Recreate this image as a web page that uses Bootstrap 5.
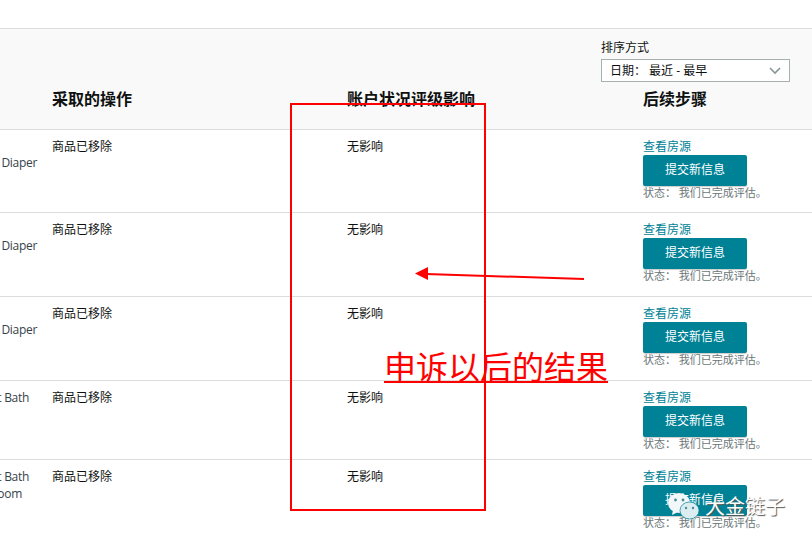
<!DOCTYPE html>
<html lang="zh">
<head>
<meta charset="utf-8">
<title>申诉结果</title>
<link href="https://cdn.jsdelivr.net/npm/bootstrap@5.3.0/dist/css/bootstrap.min.css" rel="stylesheet">
<style>
html,body{height:100%}
body{font-family:"Open Sans","Noto Sans CJK SC",sans-serif;font-size:12px;line-height:17px;color:#0f1111;background:#fff;overflow:hidden;position:relative}
.sheet{padding-top:28px}
.sortbar{background:#f9f9f9;border-top:1px solid #ddd;height:58px;padding:10px 22px 0 0;justify-content:flex-end}
.sortbox{width:189px}
.sortlabel{display:block;margin:0 0 3px;line-height:17px}
.sortpick.form-select{font-size:12px;height:23px;line-height:17px;padding:2px 24px 2px 8px;border:1px solid #a6b0b1;border-radius:0;color:#0f1111;background-size:14px 10px;background-position:right 7px center;background-image:url("data:image/svg+xml,%3csvg xmlns='http://www.w3.org/2000/svg' viewBox='0 0 14 10'%3e%3cpath fill='none' stroke='%23879596' stroke-width='1.6' d='M2 2l5 5 5-5'/%3e%3c/svg%3e")}
.restable.table{table-layout:fixed;width:812px;margin:0;--bs-table-bg:transparent;--bs-table-color:#0f1111;--bs-table-border-color:#ddd}
.restable th{background:#f9f9f9;font-size:16px;line-height:24px;font-weight:700;height:43px;padding:1px 0 0;vertical-align:top;border-bottom:1px solid #ddd;color:#0f1111}
.restable td{padding:8px 0 0;vertical-align:top;border-bottom:1px solid #ddd}
.restable tbody tr:last-child td{border-bottom:0}
.cw1{width:52px}.cw2{width:295px}.cw3{width:296px}
.rowtall{height:83.7px}
.rowshort{height:79px}
.prodname{color:#36424a;display:flex;justify-content:flex-end;padding-right:15px;white-space:nowrap;height:17px;overflow:hidden;letter-spacing:-.3px}
.blankline{height:16px}
.nudge1{padding-right:23px}
.nudge2{padding-right:30px}
.viewlink{color:#008296;text-decoration:none;display:block;line-height:17px}
.btn.submitbtn{display:block;width:104px;height:31px;padding:0;background:#008296;border:0;border-radius:2px;color:#fff;font-size:12px;line-height:29px;box-shadow:0 1px 1px #ccc}
.statusline{color:#6c7778;font-size:11px;line-height:13px}
.overlay-svg{position:absolute;left:0;top:0;width:812px;height:543px;pointer-events:none}
.redcaption{position:absolute;left:384px;top:346px;font-size:32px;line-height:42px;color:#f00;font-weight:400;text-decoration:underline;text-decoration-thickness:2px;text-underline-offset:2px;white-space:nowrap}
.wmark{position:absolute;left:705px;top:494px;font-size:20px;line-height:26px;color:#fff;text-shadow:1px 1px 1px #555;white-space:nowrap}
</style>
</head>
<body>
<div class="sheet">
  <div class="sortbar d-flex">
    <div class="sortbox">
      <label class="sortlabel" for="sortpick">排序方式</label>
      <select id="sortpick" class="form-select sortpick"><option>日期：  最近 - 最早</option></select>
    </div>
  </div>
  <table class="table restable">
    <colgroup><col class="cw1"><col class="cw2"><col class="cw3"><col></colgroup>
    <thead><tr><th></th><th>采取的操作</th><th>账户状况评级影响</th><th>后续步骤</th></tr></thead>
    <tbody>
      <tr class="rowtall"><td><div class="prodname blankline"></div><div class="prodname">Diaper</div></td><td>商品已移除</td><td>无影响</td><td><a class="viewlink" href="#">查看房源</a><a class="btn submitbtn" href="#">提交新信息</a><div class="statusline">状态： 我们已完成评估。</div></td></tr>
      <tr class="rowtall"><td><div class="prodname blankline"></div><div class="prodname">Diaper</div></td><td>商品已移除</td><td>无影响</td><td><a class="viewlink" href="#">查看房源</a><a class="btn submitbtn" href="#">提交新信息</a><div class="statusline">状态： 我们已完成评估。</div></td></tr>
      <tr class="rowtall"><td><div class="prodname blankline"></div><div class="prodname">Diaper</div></td><td>商品已移除</td><td>无影响</td><td><a class="viewlink" href="#">查看房源</a><a class="btn submitbtn" href="#">提交新信息</a><div class="statusline">状态： 我们已完成评估。</div></td></tr>
      <tr class="rowshort"><td><div class="prodname nudge1">t Bath</div></td><td>商品已移除</td><td>无影响</td><td><a class="viewlink" href="#">查看房源</a><a class="btn submitbtn" href="#">提交新信息</a><div class="statusline">状态： 我们已完成评估。</div></td></tr>
      <tr><td><div class="prodname nudge1">t Bath</div><div class="prodname nudge2">oom</div></td><td>商品已移除</td><td>无影响</td><td><a class="viewlink" href="#">查看房源</a><a class="btn submitbtn" href="#">提交新信息</a><div class="statusline">状态： 我们已完成评估。</div></td></tr>
    </tbody>
  </table>
</div>
<svg class="overlay-svg" viewBox="0 0 812 543" aria-hidden="true">
  <rect x="291" y="104" width="194" height="406" fill="none" stroke="#f00" stroke-width="2"/>
  <line x1="584" y1="279" x2="426" y2="274" stroke="#f00" stroke-width="2"/>
  <path d="M415 273.5L428 267v13z" fill="#f00"/>
  <g>
    <ellipse cx="679" cy="503" rx="11" ry="10" fill="#f2f7f9"/>
    <path d="M673 510l-1 5 6-3z" fill="#f2f7f9"/>
    <circle cx="675.5" cy="500" r="1.4" fill="#4a8a9a"/>
    <circle cx="683" cy="500" r="1.4" fill="#4a8a9a"/>
    <ellipse cx="689.5" cy="510.5" rx="9.5" ry="8.5" fill="#dcedf2" stroke="#008296" stroke-width=".7"/>
    <circle cx="686" cy="508" r="1.2" fill="#4a8a9a"/>
    <circle cx="693" cy="508" r="1.2" fill="#4a8a9a"/>
  </g>
</svg>
<div class="redcaption">申诉以后的结果</div>
<div class="wmark">大金链子</div>
</body>
</html>
